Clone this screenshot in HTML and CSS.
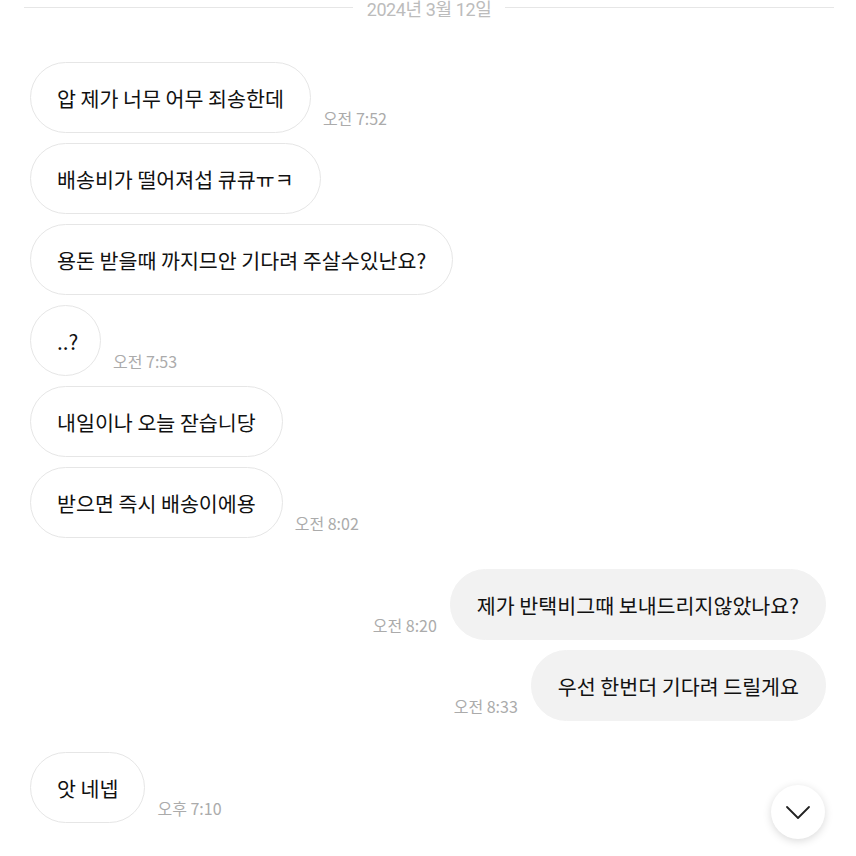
FILE: index.html
```html
<html>

<head>
    <meta name="viewport" content="width=device-width, initial-scale=1">
    <link rel="stylesheet" href="styles.css">
</head>

<body>
    <div class="chat">
        <div class="date-divider">
            <span class="line"></span>
            <span class="date-text">2024년 3월 12일</span>
            <span class="line"></span>
        </div>

        <div class="messages">
            <div class="row">
                <div class="bubble">압 제가 너무 어무 죄송한데</div>
                <div class="time">오전 7:52</div>
            </div>
            <div class="row">
                <div class="bubble">배송비가 떨어져섭 큐큐ㅠㅋ</div>
            </div>
            <div class="row">
                <div class="bubble">용돈 받을때 까지므안 기다려 주살수있난요?</div>
            </div>
            <div class="row">
                <div class="bubble short">..?</div>
                <div class="time">오전 7:53</div>
            </div>
            <div class="row">
                <div class="bubble">내일이나 오늘 잗습니당</div>
            </div>
            <div class="row">
                <div class="bubble">받으면 즉시 배송이에용</div>
                <div class="time">오전 8:02</div>
            </div>

            <div class="row mine group-start">
                <div class="time">오전 8:20</div>
                <div class="bubble">제가 반택비그때 보내드리지않았나요?</div>
            </div>
            <div class="row mine">
                <div class="time">오전 8:33</div>
                <div class="bubble">우선 한번더 기다려 드릴게요</div>
            </div>

            <div class="row group-start">
                <div class="bubble">앗 네넵</div>
                <div class="time">오후 7:10</div>
            </div>
        </div>

        <div class="scroll-down">
            <svg width="26" height="26" viewBox="0 0 26 26">
                <path d="M2 8 L13 19 L24 8" fill="none" stroke="#222" stroke-width="1.8" stroke-linecap="round" stroke-linejoin="round" />
            </svg>
        </div>
    </div>
</body>

</html>
```

FILE: styles.css
```css
body {
    margin: 0;
    background-color: #fff;
    font-family: "Noto Sans CJK KR", "Noto Sans", sans-serif;
    overflow: hidden;
}

.chat {
    position: relative;
    width: 856px;
    height: 856px;
}

.date-divider {
    display: flex;
    align-items: center;
    gap: 14px;
    padding: 0 22px 0 24px;
    height: 17px;
    margin-top: -1px;
}

.date-divider .line {
    flex: 1;
    height: 1px;
    background-color: #e6e6e6;
}

.date-text {
    font-family: Roboto, "Noto Sans CJK KR", sans-serif;
    font-size: 18px;
    color: #bcbcbc;
    letter-spacing: -0.4px;
}

.messages {
    display: flex;
    flex-direction: column;
    gap: 10px;
    padding: 46px 30px 0 30px;
}

.row {
    display: flex;
    align-items: flex-end;
}

.row.mine {
    justify-content: flex-end;
}

.row.group-start {
    margin-top: 21px;
}

.bubble {
    box-sizing: border-box;
    height: 71px;
    display: flex;
    align-items: center;
    padding: 0 26px 0 26px;
    border: 1px solid #e6e6e6;
    border-radius: 36px;
    font-size: 20.6px;
    color: #111;
    white-space: nowrap;
}

.bubble.short {
    width: 71px;
    padding: 0 0 0 26px;
}

.mine .bubble {
    background-color: #f2f2f2;
    border-color: #f2f2f2;
}

.time {
    font-size: 16px;
    color: #ababab;
    margin: 0 0 3px 12px;
    white-space: nowrap;
}

.mine .time {
    margin: 0 13px 3px 0;
}

.scroll-down {
    position: absolute;
    left: 771px;
    top: 786px;
    width: 54px;
    height: 54px;
    border-radius: 50%;
    background-color: #fff;
    box-shadow: 0 2px 8px rgba(0, 0, 0, 0.15);
    display: flex;
    align-items: center;
    justify-content: center;
}
```
